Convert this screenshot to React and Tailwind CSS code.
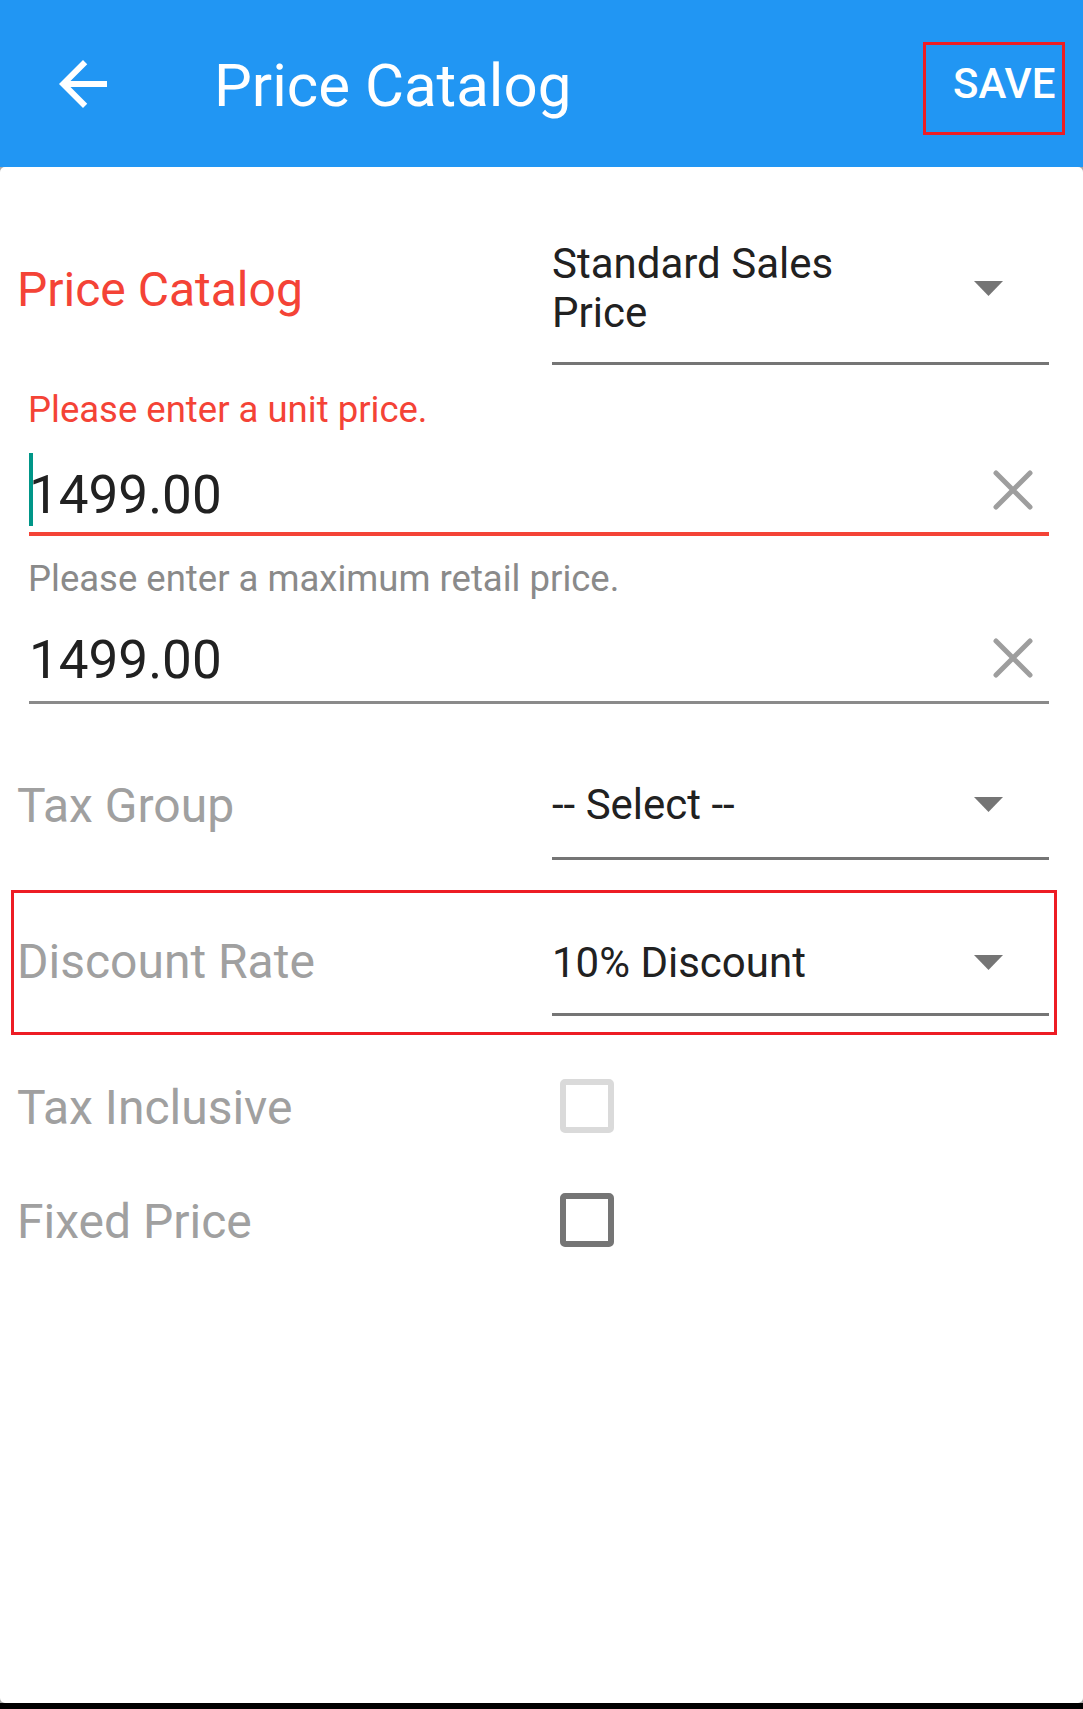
import React from 'react';

const Caret = ({ className = '' }) => (
  <svg className={className} width="29" height="15" viewBox="0 0 29 15">
    <polygon points="0,0 29,0 14.5,15" fill="#757575" />
  </svg>
);

const ClearIcon = ({ className = '' }) => (
  <svg className={className} width="40" height="40" viewBox="0 0 40 40">
    <path d="M3 3 L37 37 M37 3 L3 37" stroke="#9e9e9e" strokeWidth="5" strokeLinecap="round" fill="none" />
  </svg>
);

const Checkbox = ({ color }) => (
  <div className={`w-[54px] h-[54px] mt-[-1px] ml-[8px] rounded-[5px] border-[6px] ${color}`} />
);

const Dropdown = ({ children, gap, top }) => (
  <div className="w-[497px]" style={{ marginTop: top }}>
    <div className="flex items-center justify-between">
      <div className="text-[42px] leading-[49px] text-[#212121]">{children}</div>
      <Caret className="mr-[46px]" />
    </div>
    <div className="h-[3px] bg-[#757575]" style={{ marginTop: gap }} />
  </div>
);

const App = () => (
  <div className="h-[1709px] bg-black flex flex-col font-['Roboto','Noto_Sans',sans-serif]">

    {/* Toolbar */}
    <div className="h-[167px] shrink-0 bg-[#2196F3] flex items-center pl-[47px]">
      <svg width="72" height="72" viewBox="0 0 24 24" fill="#ffffff">
        <path d="M20 11H7.83l5.59-5.59L12 4l-8 8 8 8 1.41-1.41L7.83 13H20v-2z" />
      </svg>
      <div className="ml-[95px] mt-[4px] text-[60px] leading-[70px] text-white">Price Catalog</div>
      <div className="ml-auto mr-[18px] mt-[10px] w-[142px] h-[93px] border-[3px] border-[#ED1C24] pt-[14px] pl-[27px] text-[42px] leading-[50px] font-medium text-white">
        SAVE
      </div>
    </div>

    {/* Form card */}
    <div className="bg-[#a8a8a8] shrink-0">
      <div className="h-[1536px] bg-white rounded-[5px] pt-[72px]">

        <div className="flex items-start pl-[17px] pr-[34px]">
          <div className="flex-1 mt-[23px] text-[48px] leading-[55px] text-[#F44336]">Price Catalog</div>
          <Dropdown top={0} gap={25}>Standard Sales<br />Price</Dropdown>
        </div>

        <div className="pl-[29px] pr-[34px]">
          <div className="mt-[24px] -ml-[1px] text-[36.5px] leading-[42px] text-[#F44336]">Please enter a unit price.</div>
          <div className="relative mt-[22px] h-[73px] flex items-end justify-between">
            <span className="absolute left-0 top-0 w-[4px] h-[73px] bg-[#009688]" />
            <span className="text-[53px] leading-[62px] text-[#212121]">1499.00</span>
            <ClearIcon className="self-center mr-[16px]" />
          </div>
          <div className="mt-[6px] h-[4px] bg-[#F44336]" />

          <div className="mt-[22px] -ml-[1px] text-[36.5px] leading-[42px] text-[#8a8a8a]">Please enter a maximum retail price.</div>
          <div className="mt-[18px] h-[73px] flex items-end justify-between">
            <span className="text-[53px] leading-[62px] text-[#212121]">1499.00</span>
            <ClearIcon className="self-center mt-[6px] mr-[16px]" />
          </div>
          <div className="mt-[10px] h-[3px] bg-[#8a8a8a]" />
        </div>

        <div className="mt-[74px] flex items-start pl-[17px] pr-[34px]">
          <div className="flex-1 text-[48px] leading-[55px] text-[#a0a0a0]">Tax Group</div>
          <Dropdown top={2} gap={28}>-- Select --</Dropdown>
        </div>

        <div className="mt-[30px] ml-[11px] mr-[26px] border-[3px] border-[#ED1C24] pt-[41px] pb-[16px] pl-[3px] pr-[5px] flex items-start">
          <div className="flex-1 text-[48px] leading-[55px] text-[#a0a0a0]">Discount Rate</div>
          <Dropdown top={4} gap={26}>10% Discount</Dropdown>
        </div>

        <div className="mt-[45px] flex items-start pl-[17px] pr-[34px]">
          <div className="flex-1 text-[48px] leading-[55px] text-[#a0a0a0]">Tax Inclusive</div>
          <div className="w-[497px]">
            <Checkbox color="border-[#dadada]" />
          </div>
        </div>

        <div className="mt-[59px] flex items-start pl-[17px] pr-[34px]">
          <div className="flex-1 text-[48px] leading-[55px] text-[#a0a0a0]">Fixed Price</div>
          <div className="w-[497px]">
            <Checkbox color="border-[#757575]" />
          </div>
        </div>
      </div>
    </div>
  </div>
);

export default App;
